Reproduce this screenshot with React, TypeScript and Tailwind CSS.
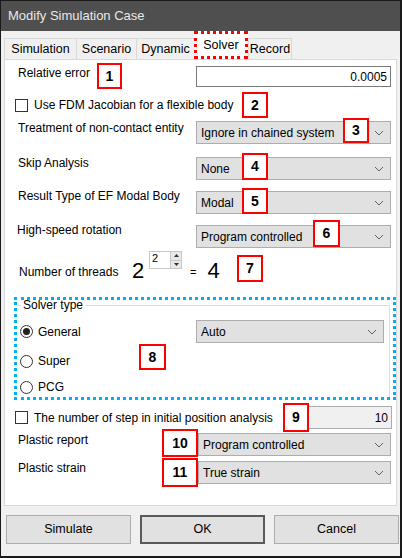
import { ReactNode } from 'react';

function Chevron() {
  return (
    <svg width="10" height="6" viewBox="0 0 10 6" className="shrink-0">
      <path d="M1 1 L5 5 L9 1" fill="none" stroke="#606060" strokeWidth="1" />
    </svg>
  );
}

function Select({ value, className = '' }: { value: string; className?: string }) {
  return (
    <div
      className={`h-[23px] bg-[#e1e1e1] border border-[#adadad] flex items-center justify-between pl-[4px] pr-[6px] ${className}`}
    >
      <span className="text-[12px] text-black leading-none">{value}</span>
      <Chevron />
    </div>
  );
}

function Checkbox() {
  return <div className="w-[13px] h-[13px] border border-[#333] bg-white shrink-0" />;
}

function Radio({ checked }: { checked?: boolean }) {
  return (
    <div className="w-[13px] h-[13px] rounded-full border border-[#333] bg-white flex items-center justify-center shrink-0">
      {checked && <div className="w-[7px] h-[7px] rounded-full bg-[#222]" />}
    </div>
  );
}

function Mark({ n, x, y, w, h }: { n: string; x: number; y: number; w: number; h: number }) {
  return (
    <div
      className="absolute border-2 border-[#ff0000] bg-white flex items-center justify-center font-bold text-[14px] text-black"
      style={{ left: x, top: y, width: w, height: h }}
    >
      {n}
    </div>
  );
}

function Tab({ children, active, className = '' }: { children: ReactNode; active?: boolean; className?: string }) {
  if (active) {
    return (
      <div
        className={`h-[28px] -mt-[4px] bg-white border-[3px] border-dotted border-[#ff0000] flex items-center justify-center text-[12.5px] relative z-10 ${className}`}
      >
        {children}
      </div>
    );
  }
  return (
    <div
      className={`h-[21px] bg-[#f0f0f0] border border-[#d9d9d9] border-b-0 flex items-center justify-center text-[12.5px] -mr-px ${className}`}
    >
      {children}
    </div>
  );
}

function Button({ label, primary }: { label: string; primary?: boolean }) {
  return (
    <div
      className={`h-[29px] w-[125px] bg-[#e1e1e1] flex items-center justify-center text-[12.5px] ${
        primary ? 'border-2 border-[#5a5a5a]' : 'border border-[#adadad]'
      }`}
    >
      {label}
    </div>
  );
}

export default function App() {
  return (
    <div className="w-[402px] h-[558px] relative bg-[#f0f0f0] border-l border-t border-r-2 border-b-2 border-[#1a1a1a] font-['Liberation_Sans',Arial,sans-serif] text-black flex flex-col overflow-hidden">
      {/* title bar */}
      <div className="h-[30px] bg-[#4f4f4f] flex items-center pl-[7px] text-[13px] text-[#e8e8e8] shrink-0">
        Modify Simulation Case
      </div>

      {/* tabs */}
      <div className="flex items-end pl-[3px] mt-[7px] h-[21px]">
        <Tab className="w-[73px]">Simulation</Tab>
        <Tab className="w-[61px]">Scenario</Tab>
        <Tab className="w-[59px]">Dynamic</Tab>
        <Tab active className="w-[54px]">Solver</Tab>
        <Tab className="w-[44px]">Record</Tab>
      </div>

      {/* panel */}
      <div className="mx-[3px] h-[447px] bg-white border border-[#d9d9d9] flex flex-col text-[12px]">
        <div className="flex items-start mt-[6px]">
          <div className="w-[191px] pl-[13px] leading-[15px]">Relative error</div>
          <div className="w-[195px] h-[21px] border border-[#7a7a7a] flex items-center justify-end pr-[3px]">0.0005</div>
        </div>

        <div className="flex items-center gap-[6px] mt-[11px] pl-[10px] h-[14px]">
          <Checkbox />
          <span>Use FDM Jacobian for a flexible body</span>
        </div>

        <div className="flex items-start mt-[9px]">
          <div className="w-[191px] pl-[13px] leading-[14px]">Treatment of non-contact entity</div>
          <Select value="Ignore in chained system" className="w-[195px]" />
        </div>

        <div className="flex items-start mt-[13px]">
          <div className="w-[191px] pl-[13px] leading-[12px]">Skip Analysis</div>
          <Select value="None" className="w-[195px]" />
        </div>

        <div className="flex items-start mt-[11px]">
          <div className="w-[191px] pl-[13px] leading-[10px]">Result Type of EF Modal Body</div>
          <Select value="Modal" className="w-[195px]" />
        </div>

        <div className="flex items-start mt-[11px]">
          <div className="w-[191px] pl-[12px] leading-[10px]">High-speed rotation</div>
          <Select value="Program controlled" className="w-[195px]" />
        </div>

        <div className="flex items-start mt-[3px] h-[33px] pl-[14px]">
          <div className="w-[113px] pt-[14px] leading-[14px]">Number of threads</div>
          <div className="w-[17px] pt-[9px] text-[22px] leading-[22px]">2</div>
          <div className="w-[33px] h-[18px] border border-[#c8c8c8] flex">
            <span className="flex-1 text-[11px] leading-[12px] pl-[2px]">2</span>
            <div className="w-[11px] flex flex-col border-l border-[#c8c8c8]">
              <div className="flex-1 bg-[#e8e8e8] flex items-center justify-center">
                <svg width="5" height="3" viewBox="0 0 5 3"><path d="M0 3 L2.5 0 L5 3 Z" fill="#333" /></svg>
              </div>
              <div className="flex-1 bg-[#e8e8e8] flex items-center justify-center border-t border-[#c8c8c8]">
                <svg width="5" height="3" viewBox="0 0 5 3"><path d="M0 0 L2.5 3 L5 0 Z" fill="#333" /></svg>
              </div>
            </div>
          </div>
          <div className="ml-[8px] pt-[14px] text-[11px] leading-[14px]">=</div>
          <div className="ml-[11px] pt-[9px] text-[22px] leading-[22px]">4</div>
        </div>

        {/* solver type */}
        <div className="mt-[13px] ml-[9px] w-[382px] h-[103px] border-[3px] border-dotted border-[#00b0f0] flex">
          <fieldset className="flex-1 ml-[1px] mr-[3px] -mt-[1px] border border-[#dcdcdc] border-l-0 border-b-0 px-0 min-w-0">
            <legend className="ml-[3px] px-[2px] text-[12px] leading-[12px]">Solver type</legend>
            <div className="flex items-center mt-[9px]">
              <div className="flex items-center gap-[5px] w-[178px] pl-[2px]">
                <Radio checked />
                <span>General</span>
              </div>
              <Select value="Auto" className="w-[188px]" />
            </div>
            <div className="flex items-center gap-[5px] pl-[2px] mt-[9px]">
              <Radio />
              <span>Super</span>
            </div>
            <div className="flex items-center gap-[5px] pl-[2px] mt-[8px]">
              <Radio />
              <span>PCG</span>
            </div>
          </fieldset>
        </div>

        <div className="flex items-center mt-[6px] h-[23px] pl-[10px]">
          <div className="flex items-center gap-[6px] w-[283px]">
            <Checkbox />
            <span>The number of step in initial position analysis</span>
          </div>
          <div className="w-[94px] h-[23px] border border-[#adadad] bg-[#f0f0f0] flex items-center justify-end pr-[3px]">10</div>
        </div>

        <div className="flex items-start mt-[4px]">
          <div className="w-[193px] pl-[13px] leading-[14px]">Plastic report</div>
          <Select value="Program controlled" className="w-[193px]" />
        </div>

        <div className="flex items-start mt-[5px]">
          <div className="w-[193px] pl-[13px] leading-[14px]">Plastic strain</div>
          <Select value="True strain" className="w-[193px]" />
        </div>
      </div>

      {/* buttons */}
      <div className="flex items-center gap-[9px] mt-[9px] pl-[5px]">
        <Button label="Simulate" />
        <Button label="OK" primary />
        <Button label="Cancel" />
      </div>

      <Mark n="1" x={96} y={62} w={25} h={26} />
      <Mark n="2" x={241} y={91} w={26} h={26} />
      <Mark n="3" x={342} y={117} w={26} h={25} />
      <Mark n="4" x={241} y={152} w={26} h={27} />
      <Mark n="5" x={241} y={187} w={26} h={26} />
      <Mark n="6" x={312} y={219} w={27} h={27} />
      <Mark n="7" x={236} y={254} w={26} h={27} />
      <Mark n="8" x={138} y={343} w={27} h={26} />
      <Mark n="9" x={282} y={402} w={26} h={29} />
      <Mark n="10" x={161} y={428} w={36} h={28} />
      <Mark n="11" x={161} y={457} w={36} h={29} />
    </div>
  );
}
